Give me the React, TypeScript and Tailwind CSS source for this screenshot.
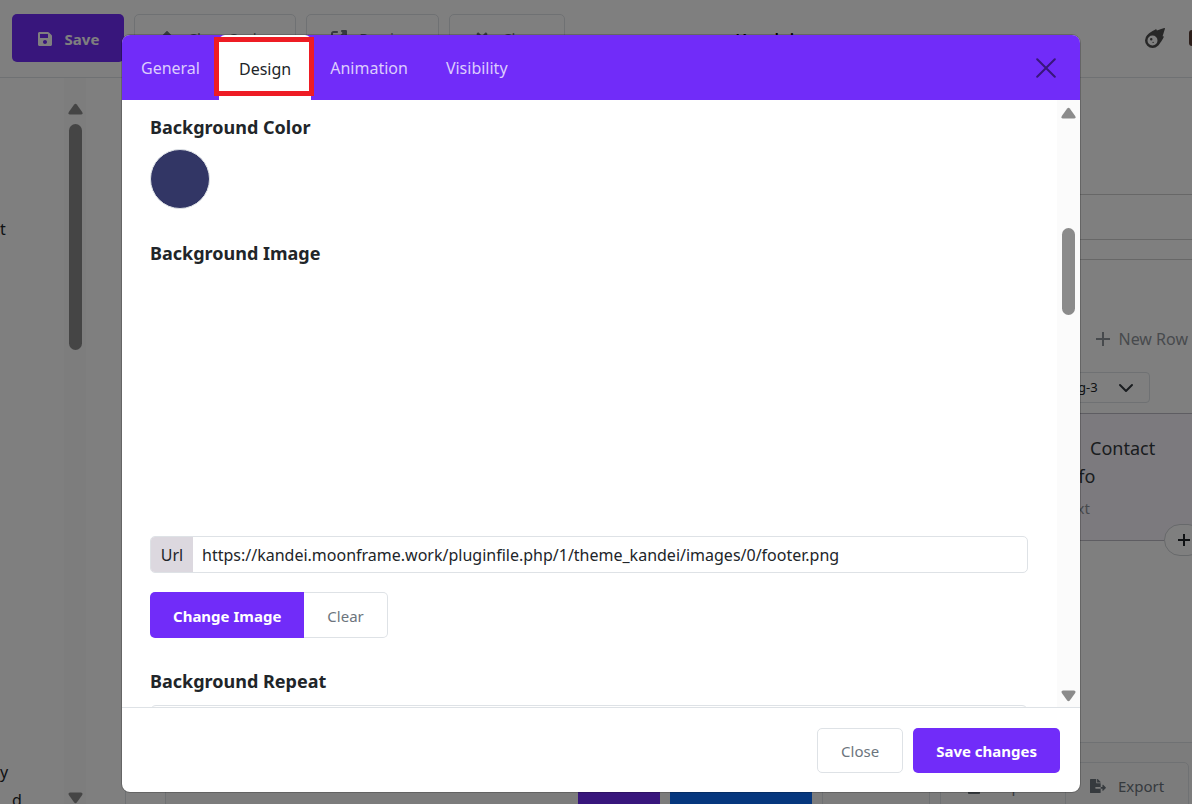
import React, { useState } from 'react';
import {
  FaArrowUp,
  FaFileExport,
  FaFileImport,
  FaMeteor,
  FaPlus,
  FaSave,
  FaTimes,
} from 'react-icons/fa';
import { FaUpRightFromSquare } from 'react-icons/fa6';

const tabs = ['General', 'Design', 'Animation', 'Visibility'];

function Arrow({ down = false }: { down?: boolean }) {
  return (
    <svg
      viewBox="0 0 15 12"
      className={`w-[15px] h-3 shrink-0 ${down ? 'rotate-180' : ''}`}
      fill="#8b8b8b"
      aria-hidden="true"
    >
      <path d="M6.2 1.4Q7.5 0 8.8 1.4L14.2 9Q15.2 11.3 13 11.5H2Q-.2 11.3.8 9Z" />
    </svg>
  );
}

function ToolButton({ icon, label, className }: { icon: React.ReactNode; label: string; className: string }) {
  return (
    <button
      type="button"
      className={`h-12 shrink-0 flex items-center justify-center gap-3 rounded-[5px] border border-[#dee2e6] text-[15px] text-[#6c757d] ${className}`}
    >
      <span className="text-base text-[#6c757d]">{icon}</span>
      {label}
    </button>
  );
}

function Sidebar() {
  return (
    <aside className="w-[126px] shrink-0 flex border-r border-[#dee2e6]">
      <div className="w-16 flex flex-col text-base leading-6 text-[#212529] pt-[139px]">
        <span>t</span>
        <span className="mt-auto">y</span>
        <span className="ml-3 mt-1 h-4">d</span>
      </div>
      <div className="w-[22px] bg-[#fbfbfb] flex flex-col items-center pt-[25px]">
        <Arrow />
        <div className="mt-[9px] w-[13px] h-[226px] rounded-full bg-[#8b8b8b]" />
        <div className="mt-auto">
          <Arrow down />
        </div>
      </div>
    </aside>
  );
}

function Builder() {
  return (
    <main className="flex-1 min-w-0 flex flex-col">
      <div className="h-[117px] border-b border-[#cfcfcf]" />
      <div className="h-[45px] border-b border-[#cfcfcf]" />
      <div className="h-5 border-b border-[#cfcfcf]" />
      <div className="h-[153px] flex flex-col items-end">
        <button type="button" className="mt-[65px] mr-1 flex items-center gap-2 text-base leading-7 text-[#8f959b]">
          <svg viewBox="0 0 16 16" className="w-4 h-4" stroke="currentColor" strokeWidth="2">
            <path d="M8 1v14M1 8h14" />
          </svg>
          New Row
        </button>
        <div className="mt-[19px] mr-[42px] relative">
          <select
            aria-label="Column size"
            className="appearance-none w-40 h-[31px] pl-[62px] rounded-[4px] border border-[#dee2e6] text-[13px] text-[#212529]"
          >
            <option>col-lg-3</option>
          </select>
          <svg
            viewBox="0 0 16 16"
            className="absolute right-4 top-2 w-4 h-4 pointer-events-none"
            fill="none"
            stroke="#343a40"
            strokeWidth="2"
            strokeLinecap="round"
            strokeLinejoin="round"
          >
            <path d="m2 5 6 6 6-6" />
          </svg>
        </div>
      </div>
      <div className="relative h-32 border-y border-[#bdbac4] bg-[#f9f4fd] flex justify-end">
        <div className="w-36 pt-5 text-lg leading-7 text-[#343a40]">
          <div className="pl-[42px]">Contact</div>
          <div className="pl-[13px]">Info</div>
          <div className="pl-[13px] pt-1 text-[15px] text-[#8f959b]">Text</div>
        </div>
        <button
          type="button"
          aria-label="Add column"
          className="absolute -right-3 -bottom-4 w-10 h-8 rounded-full border border-[#cfd2d6] bg-white flex items-center justify-center text-[#212529]"
        >
          <svg viewBox="0 0 12 12" className="w-3 h-3" stroke="currentColor" strokeWidth="2">
            <path d="M6 0v12M0 6h12" />
          </svg>
        </button>
      </div>
      <div className="flex-1" />
      <footer className="h-[62px] shrink-0 border-t border-[#dee2e6] bg-[#f9f9f9] overflow-hidden flex items-start justify-end pt-[19px] pr-[3px]">
        <div className="h-12 w-[82px] mr-[10px] bg-[#712cf9]" />
        <div className="h-12 w-[142px] mr-[10px] bg-[#0d6efd]" />
        <ToolButton icon={null} label="" className="w-[108px] mr-[10px]" />
        <ToolButton icon={<FaFileImport />} label="Import" className="w-[126px] rounded-r-none" />
        <ToolButton icon={<FaFileExport />} label="Export" className="w-[124px] rounded-l-none -ml-px" />
      </footer>
    </main>
  );
}

function Dialog() {
  const [active, setActive] = useState('Design');
  const [url, setUrl] = useState('https://kandei.moonframe.work/pluginfile.php/1/theme_kandei/images/0/footer.png');

  return (
    <div
      role="dialog"
      aria-label="Element settings"
      className="flex-1 min-w-0 flex flex-col overflow-hidden rounded-lg bg-white outline outline-1 outline-black/20"
    >
      <header className="h-[65px] shrink-0 flex items-start bg-[#712cf9] pr-6">
        <div role="tablist" className="flex h-full text-base">
          {tabs.map((tab) => {
            const selected = tab === active;
            return (
              <button
                key={tab}
                type="button"
                role="tab"
                aria-selected={selected}
                onClick={() => setActive(tab)}
                className={
                  selected
                    ? 'relative h-full px-5 rounded-t-md bg-white text-[#212529] pt-0.5'
                    : 'h-full px-[19px] text-[#dccdfd]'
                }
              >
                {tab}
                {selected && <span className="absolute -left-[5px] -right-[3px] top-0.5 bottom-1 border-[5px] border-[#ee1c24]" />}
              </button>
            );
          })}
        </div>
        <button type="button" aria-label="Close dialog" className="ml-auto self-center">
          <svg viewBox="0 0 20 20" className="w-5 h-5" stroke="#38167c" strokeWidth="2" strokeLinecap="round">
            <path d="m1.2 1.2 17.6 17.6M18.8 1.2 1.2 18.8" />
          </svg>
        </button>
      </header>

      <div className="flex-1 min-h-0 flex">
        <div className="flex-1 min-w-0 overflow-hidden pl-7 pr-[29px] pt-[13px] text-[#212529]">
          <h2 className="text-lg leading-7 font-bold">Background Color</h2>
          <button
            type="button"
            aria-label="Background color"
            className="mt-2 block w-[60px] h-[60px] rounded-full border border-[#dee2e6] bg-[#323665]"
          />
          <h2 className="mt-[30px] text-lg leading-7 font-bold">Background Image</h2>
          <div className="mt-[269px] flex h-[37px] rounded-[5px] border border-[#dee2e6] overflow-hidden text-base">
            <label htmlFor="bg-url" className="w-[42px] shrink-0 flex items-center justify-center bg-[#dcd8df]">
              Url
            </label>
            <input
              id="bg-url"
              value={url}
              onChange={(e) => setUrl(e.target.value)}
              className="flex-1 min-w-0 px-[9px] outline-none"
            />
          </div>
          <div className="mt-[19px] flex h-[46px] text-[15px]">
            <button type="button" className="px-[23px] pt-0.5 rounded-l-[5px] bg-[#712cf9] font-bold text-white">
              Change Image
            </button>
            <button
              type="button"
              onClick={() => setUrl('')}
              className="px-[23px] pt-0.5 rounded-r-[5px] border border-l-0 border-[#dee2e6] text-[#6c757d]"
            >
              Clear
            </button>
          </div>
          <h2 className="mt-[29px] text-lg leading-7 font-bold">Background Repeat</h2>
          <select
            aria-label="Background repeat"
            className="mt-2.5 appearance-none w-full h-10 px-3 rounded-md border border-[#dee2e6]"
          >
            <option>repeat</option>
          </select>
        </div>
        <div className="w-[23px] shrink-0 flex flex-col items-center pt-[7px] pb-[5px] bg-[#fbfbfb]">
          <Arrow />
          <div className="mt-[109px] w-[13px] h-[87px] rounded-full bg-[#8b8b8b]" />
          <div className="mt-auto">
            <Arrow down />
          </div>
        </div>
      </div>

      <footer className="h-[85px] shrink-0 flex items-start justify-end gap-2.5 pt-5 pr-5 border-t border-[#dee2e6] text-[15px]">
        <button type="button" className="h-[45px] px-[23px] pt-0.5 rounded-[5px] border border-[#dee2e6] text-[#6c757d]">
          Close
        </button>
        <button type="button" className="h-[45px] px-[23px] pt-0.5 rounded-[5px] bg-[#712cf9] font-bold text-white">
          Save changes
        </button>
      </footer>
    </div>
  );
}

export default function App() {
  return (
    <div className="relative h-screen overflow-hidden bg-white font-['Noto_Sans',sans-serif]">
      <div className="h-full flex flex-col">
        <header className="relative h-[78px] shrink-0 flex items-start gap-2.5 pl-3 pt-3.5 border-b border-[#dee2e6]">
          <button
            type="button"
            className="w-28 h-12 shrink-0 flex items-center justify-center gap-3 rounded-[5px] bg-[#712cf9] pt-0.5 text-[15px] font-bold text-white"
          >
            <FaSave className="w-4 h-4" />
            Save
          </button>
          <ToolButton icon={<FaArrowUp />} label="Clear Cache" className="w-[162px]" />
          <ToolButton icon={<FaUpRightFromSquare />} label="Preview" className="w-[133px]" />
          <ToolButton icon={<FaTimes />} label="Close" className="w-[116px]" />
          <div className="flex-1 h-12 flex items-center pl-[160px] pt-[3px] text-lg font-medium text-black">Kandei</div>
          <div className="h-12 flex items-center gap-6 text-[#4f4f4f]">
            <FaMeteor className="w-5 h-5" />
            <span className="w-[3px] h-4 rounded-l bg-[#5a3e36]" />
          </div>
        </header>
        <div className="flex-1 min-h-0 flex">
          <Sidebar />
          <div className="w-10 shrink-0 border-r border-[#dee2e6]" />
          <Builder />
        </div>
      </div>

      {/* Modal backdrop */}
      <div className="absolute inset-0 bg-black/50 flex pl-[122px] pr-28 pt-[35px] pb-3">
        <Dialog />
      </div>
    </div>
  );
}
